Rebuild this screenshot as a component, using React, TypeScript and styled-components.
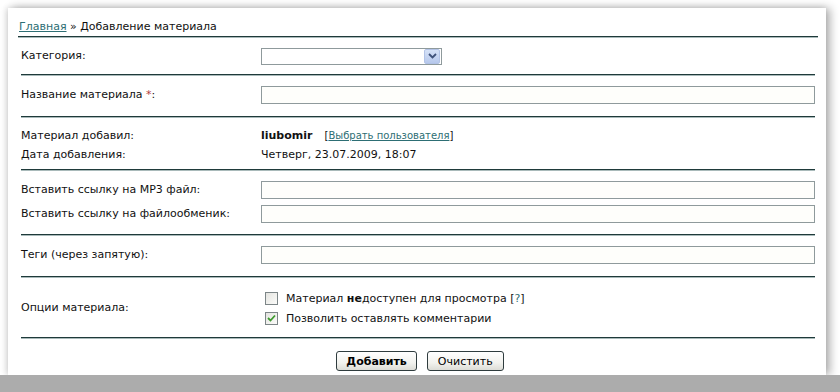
import styled, { createGlobalStyle } from "styled-components";

const GlobalStyle = createGlobalStyle`
  html, body {
    margin: 0;
    padding: 0;
    background: #ffffff;
    font-family: "DejaVu Sans", Verdana, sans-serif;
    font-size: 11px;
    color: #111;
  }
`;

const Shell = styled.div`
  width: 840px;
  height: 392px;
  display: flex;
  flex-direction: column;
  overflow: hidden;
  background: #fff;
`;

const Panel = styled.div`
  height: 367px;
  flex-shrink: 0;
  margin: 8px 14px 0 8px;
  background: #fff;
  box-shadow: -2px 0 6px rgba(0, 0, 0, 0.12), 4px 0 9px rgba(0, 0, 0, 0.32);
  display: flex;
  flex-direction: column;
`;

const Bottom = styled.div`
  flex: 1;
  background: #acacac;
`;

const Crumbs = styled.div`
  margin: 0 8px 0 10px;
  padding: 12px 1px 2px;
  border-bottom: 1px solid #1f3a3a;
  box-shadow: 0 1px 0 #a9baba;
  line-height: 14px;
`;

const Link = styled.a`
  color: #2d6e74;
  text-decoration: underline;
`;

const Form = styled.div`
  padding: 1px 11px 0 13px;
  display: flex;
  flex-direction: column;
`;

const Section = styled.div<{ $top: number; $bottom: number; $gap?: number }>`
  display: flex;
  flex-direction: column;
  gap: ${(p) => p.$gap ?? 0}px;
  padding: ${(p) => p.$top}px 0 ${(p) => p.$bottom}px;
  border-bottom: 1px solid #1f3a3a;
  box-shadow: 0 1px 0 #a9baba;
  margin-bottom: 1px;
`;

const Row = styled.div<{ $h?: number }>`
  display: grid;
  grid-template-columns: 240px 1fr;
  align-items: center;
  min-height: ${(p) => p.$h ?? 18}px;
`;

const Label = styled.div`
  line-height: 14px;
`;

const Star = styled.span`
  color: #b23a3a;
`;

const TextInput = styled.div`
  height: 16px;
  border: 1px solid #8f9a9c;
  background: #fefefb;
`;

const Select = styled.div`
  width: 178px;
  height: 15px;
  border: 1px solid #8f9a9c;
  background: #fff;
  display: flex;
  justify-content: flex-end;
  align-items: center;
  padding-right: 1px;
`;

const SelectArrow = styled.div`
  width: 14px;
  height: 13px;
  border-radius: 2px;
  background: linear-gradient(#d6e2f7, #b6c8ec);
  border: 1px solid #b2c3e6;
  display: flex;
  align-items: center;
  justify-content: center;
`;

const Value = styled.div<{ $bold?: boolean }>`
  line-height: 14px;
  font-weight: ${(p) => (p.$bold ? "bold" : "normal")};
`;

const Inline = styled.div`
  display: flex;
  align-items: center;
  gap: 12px;
`;

const Small = styled.span`
  font-size: 10px;
`;

const Checks = styled.div`
  display: flex;
  flex-direction: column;
  gap: 7px;
`;

const CheckRow = styled.div`
  display: flex;
  align-items: center;
  gap: 8px;
  line-height: 13px;
  padding-left: 4px;
`;

const Box = styled.div`
  width: 11px;
  height: 11px;
  border: 1px solid #7c8587;
  background: linear-gradient(135deg, #e4e4e0, #fbfbf9);
  display: flex;
  align-items: center;
  justify-content: center;
`;

const Hint = styled.span`
  color: #2d6e74;
`;

const Buttons = styled.div`
  display: flex;
  justify-content: center;
  gap: 10px;
  padding-top: 12px;
  padding-left: 4px;
`;

const Button = styled.button<{ $primary?: boolean }>`
  height: 20px;
  padding: 0 ${(p) => (p.$primary ? 9 : 10)}px;
  font-family: "DejaVu Sans", Verdana, sans-serif;
  font-size: 11px;
  font-weight: ${(p) => (p.$primary ? "bold" : "normal")};
  color: #000;
  border: 1px solid #2f3c3e;
  border-radius: 3px;
  background: linear-gradient(#ffffff, #f2f2ee 60%, #dcdcd6);
`;

function Chevron() {
  return (
    <svg width="9" height="6" viewBox="0 0 9 6">
      <path d="M1 1 L4.5 4.5 L8 1" fill="none" stroke="#3f527a" strokeWidth="1.8" />
    </svg>
  );
}

function Tick() {
  return (
    <svg width="9" height="8" viewBox="0 0 9 8">
      <path d="M1 4 L3.5 6.5 L8 1.5" fill="none" stroke="#3d9a2f" strokeWidth="1.8" />
    </svg>
  );
}

export default function App() {
  return (
    <Shell>
      <GlobalStyle />
      <Panel>
        <Crumbs>
          <Link href="#">Главная</Link> » Добавление материала
        </Crumbs>
        <Form>
          <Section $top={9} $bottom={9}>
            <Row>
              <Label>Категория:</Label>
              <Select>
                <SelectArrow>
                  <Chevron />
                </SelectArrow>
              </Select>
            </Row>
          </Section>
          <Section $top={10} $bottom={12}>
            <Row>
              <Label>
                Название материала <Star>*</Star>:
              </Label>
              <TextInput />
            </Row>
          </Section>
          <Section $top={8} $bottom={5}>
            <Row $h={19}>
              <Label>Материал добавил:</Label>
              <Inline>
                <Value $bold>liubomir</Value>
                <Small>
                  [<Link href="#">Выбрать пользователя</Link>]
                </Small>
              </Inline>
            </Row>
            <Row $h={19}>
              <Label>Дата добавления:</Label>
              <Value>Четверг, 23.07.2009, 18:07</Value>
            </Row>
          </Section>
          <Section $top={10} $bottom={11} $gap={6}>
            <Row>
              <Label>Вставить ссылку на MP3 файл:</Label>
              <TextInput />
            </Row>
            <Row>
              <Label>Вставить ссылку на файлообменик:</Label>
              <TextInput />
            </Row>
          </Section>
          <Section $top={10} $bottom={12}>
            <Row>
              <Label>Теги (через запятую):</Label>
              <TextInput />
            </Row>
          </Section>
          <Section $top={10} $bottom={9}>
            <Row $h={40}>
              <Label>Опции материала:</Label>
              <Checks>
                <CheckRow>
                  <Box />
                  <span>
                    Материал <b>не</b>доступен для просмотра [<Hint>?</Hint>]
                  </span>
                </CheckRow>
                <CheckRow>
                  <Box>
                    <Tick />
                  </Box>
                  <span>Позволить оставлять комментарии</span>
                </CheckRow>
              </Checks>
            </Row>
          </Section>
          <Buttons>
            <Button $primary>Добавить</Button>
            <Button>Очистить</Button>
          </Buttons>
        </Form>
      </Panel>
      <Bottom />
    </Shell>
  );
}
